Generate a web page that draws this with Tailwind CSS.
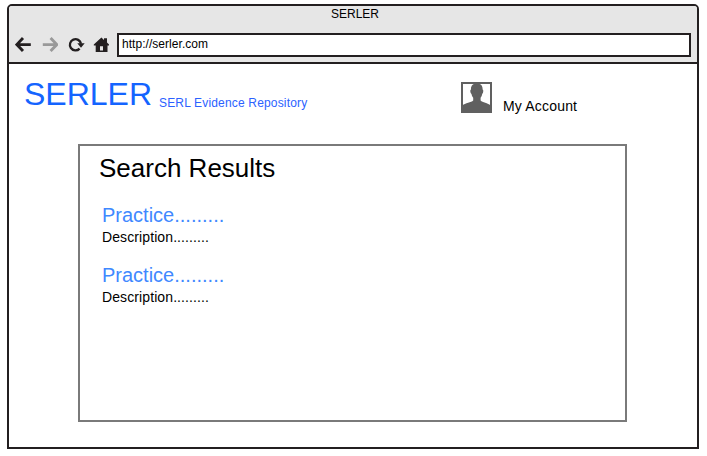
<!DOCTYPE html>
<html lang="en">
<head>
<meta charset="utf-8">
<title>SERLER</title>
<script src="https://cdn.jsdelivr.net/npm/@tailwindcss/browser@4"></script>
</head>
<body class="bg-white font-['Liberation_Sans',Arial,sans-serif] text-black">
<div class="h-[456px] w-[707px] pt-1 pl-[7px]">
  <div class="flex h-[445px] w-[692px] flex-col overflow-hidden rounded-t-[5px] border-2 border-[#231f20]">
    <header class="h-[58px] shrink-0 border-b-2 border-[#231f20] bg-[#e6e6e6]">
      <div class="h-[27px] pl-1 text-center text-xs leading-4">SERLER</div>
      <div class="flex">
        <nav class="flex w-[108px] shrink-0 pt-1 pl-[6px]">
          <svg class="mr-[11px] h-4 w-4" viewBox="0 0 16 16" fill="none" stroke="#231f20" stroke-width="2.9"><path d="M1.6 7.6H15.8M8 1.1L1.8 7.6L8 14.1"/></svg>
          <svg class="mr-[10px] h-4 w-4" viewBox="0 0 16 16" fill="none" stroke="#999" stroke-width="2.9"><path d="M.8 7.6H15M8.6 1.1L14.8 7.6L8.6 14.1"/></svg>
          <svg class="mr-[9px] h-4 w-4 overflow-visible" viewBox="0 0 16 16"><path d="M11.6 11.6A5.6 5.6 0 1 1 13 6.8" fill="none" stroke="#231f20" stroke-width="2.3"/><path d="M9.3 6.2H16.7L13 10.8Z" fill="#231f20"/></svg>
          <svg class="h-4 w-4" viewBox="0 0 16 16" fill="#231f20" fill-rule="evenodd"><path d="M8.4 .6L11 3V1.2H14V5.6L16 7.6V8.4H14.5V15H2.7V8.4H.8V7.6ZM7 9.3V13.4H10V9.3Z"/></svg>
        </nav>
        <div class="h-6 w-[574px] border-2 border-[#231f20] bg-white pt-px pl-[3px] text-xs leading-4 tracking-[0.04px]">http://serler.com</div>
      </div>
    </header>
    <main class="flex-1 bg-white">
      <div class="flex h-20 items-start">
        <h1 class="w-[135px] pt-[14px] pl-[15px] text-[32px] leading-8 whitespace-nowrap text-[#1464ff]">SERLER</h1>
        <p class="w-[302px] pt-[31px] pl-[15px] text-xs leading-4 tracking-[0.17px] text-[#2b62ff]">SERL Evidence Repository</p>
        <div class="flex items-start pl-[15px]">
          <svg class="mt-[18px] h-[31px] w-[31px]" viewBox="0 0 31 31"><path d="M1 1H30V30H1Z" fill="#fff" stroke="#606060" stroke-width="2"/><path d="M15.8 1.6C19.6 1.6 21.8 3.6 21.6 7.6C22.8 8 22.3 11.2 21.2 12C20.9 13.8 20.3 15 19.6 15.8V18.4C21.4 20.4 27 20.8 29.5 23.4V30H1.5V23.4C4 20.8 10.4 20.4 12.2 18.4V15.8C11.5 15 10.8 13.8 10.5 12C9.3 11.2 8.8 8 10 7.6C9.8 3.6 12 1.6 15.8 1.6Z" fill="#606060"/></svg>
          <span class="pt-[34px] pl-[11px] text-sm leading-4 tracking-[0.18px]">My Account</span>
        </div>
      </div>
      <section class="ml-[69px] h-[278px] w-[549px] border-2 border-[#7a7a7a] pt-[6px] pl-[19px]">
        <h2 class="text-[26px] leading-8">Search Results</h2>
        <ul class="flex flex-col gap-4 pt-[19px] pl-[3px]">
          <li>
            <a class="block text-xl leading-6 text-[#4088ff]">Practice.........</a>
            <p class="text-sm leading-5 tracking-[0.1px]">Description.........</p>
          </li>
          <li>
            <a class="block text-xl leading-6 text-[#4088ff]">Practice.........</a>
            <p class="text-sm leading-5 tracking-[0.1px]">Description.........</p>
          </li>
        </ul>
      </section>
    </main>
  </div>
</div>
</body>
</html>
